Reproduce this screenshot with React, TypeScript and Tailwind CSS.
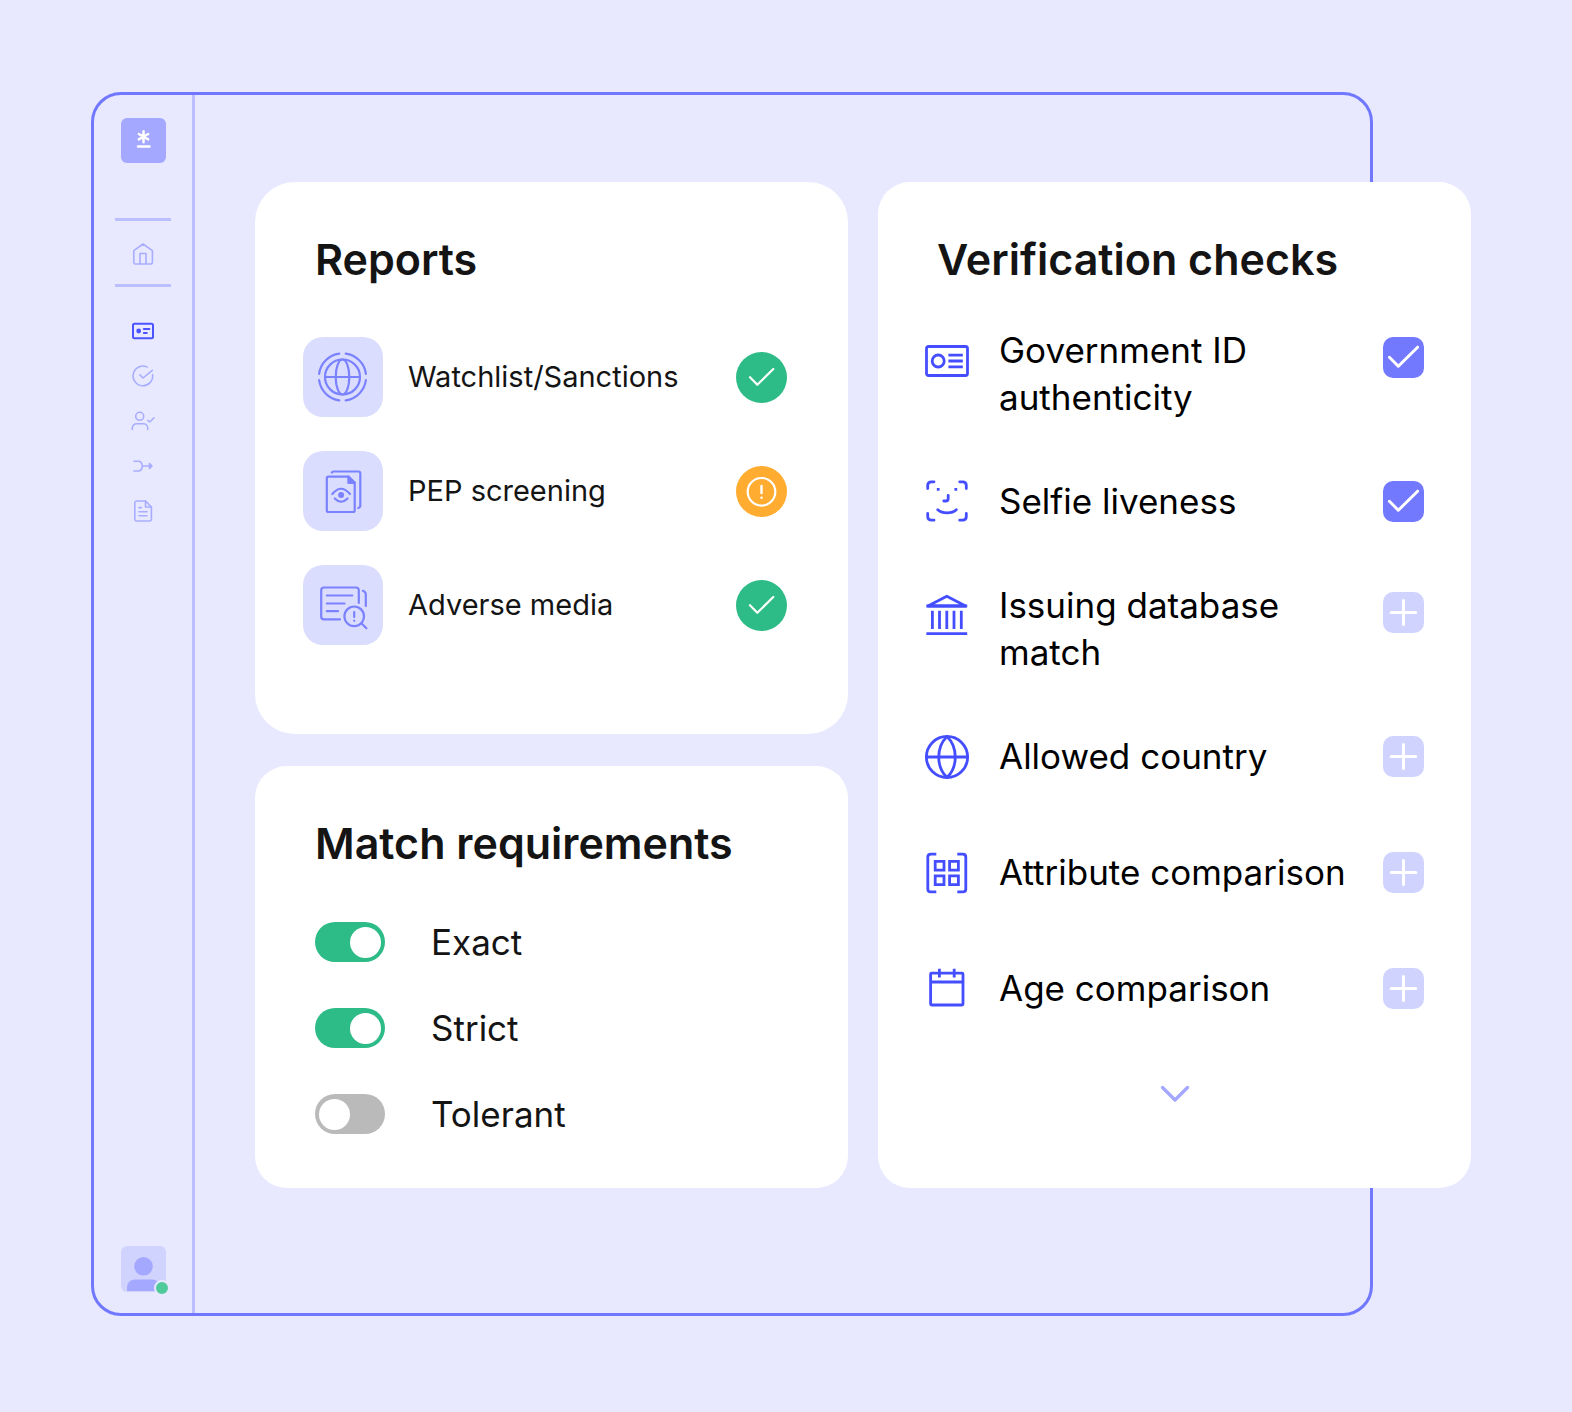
import React from 'react';

interface IconProps {
  size: number;
  stroke?: number;
  className?: string;
  children: React.ReactNode;
}

function Icon({ size, stroke = 2, className, children }: IconProps) {
  return (
    <svg
      width={size}
      height={size}
      viewBox={`0 0 ${size} ${size}`}
      fill="none"
      stroke="currentColor"
      strokeWidth={stroke}
      strokeLinecap="round"
      strokeLinejoin="round"
      className={className}
      aria-hidden="true"
    >
      {children}
    </svg>
  );
}

const navItems = [
  {
    label: 'Inquiries',
    active: true,
    icon: (
      <>
        <rect x="2" y="4.7" width="20" height="14.6" rx="1.5" />
        <circle cx="7.7" cy="12" r="2.4" fill="currentColor" stroke="none" />
        <path d="M12.8 10H18.4M12.8 14H15.8" />
      </>
    ),
  },
  {
    label: 'Verifications',
    active: false,
    icon: (
      <>
        <path d="M21.6 10.6A9.8 9.8 0 1 1 16.2 3.1" />
        <path d="M8.8 10.8L12 14L21.3 6.3" />
      </>
    ),
  },
  {
    label: 'Accounts',
    active: false,
    icon: (
      <>
        <circle cx="8.7" cy="7.3" r="4" />
        <path d="M1.3 20.5V19A4.3 4.3 0 0 1 5.6 14.7H12.4A4.3 4.3 0 0 1 16.7 19V20.5M16.8 11.3L18.8 13L23 8.8" />
      </>
    ),
  },
  {
    label: 'Workflows',
    active: false,
    icon: (
      <>
        <path d="M3 7.2H7.5C10 7.2 11 9.5 11.4 12C11 14.5 10 17 7.5 17H3M11.4 12H19" />
        <path d="M18.5 9.5V14.5L21 12Z" fill="currentColor" />
      </>
    ),
  },
  {
    label: 'Documents',
    active: false,
    icon: (
      <>
        <path d="M14.5 2H5.5A1.8 1.8 0 0 0 3.8 3.8V20.2A1.8 1.8 0 0 0 5.5 22H18.6A1.8 1.8 0 0 0 20.4 20.2V8Z" />
        <path d="M14.5 2V8H20.4M8 8.6H10.3M8 12.8H16M8 16.8H16" />
      </>
    ),
  },
];

const reports = [
  {
    label: 'Watchlist/Sanctions',
    passed: true,
    icon: (
      <>
        <circle cx="39.5" cy="40" r="17.5" />
        <ellipse cx="39.5" cy="40" rx="6.8" ry="17.5" />
        <path d="M22 40H57" />
        <path d="M42.7 16.6A23.6 23.6 0 0 1 62.9 36.8M62.9 43.2A23.6 23.6 0 0 1 42.7 63.4M36.3 63.4A23.6 23.6 0 0 1 16.1 43.2M16.1 36.8A23.6 23.6 0 0 1 36.3 16.6" />
      </>
    ),
  },
  {
    label: 'PEP screening',
    passed: false,
    icon: (
      <>
        <path d="M28.8 21.6Q29.2 20.5 30.5 20.5H55.5Q57.3 20.5 57.3 22.3V54.5Q57.3 56.5 55.2 57" />
        <path d="M45.4 25.6H25.5Q23.8 25.6 23.8 27.3V59.4Q23.8 61 25.5 61H50Q51.7 61 51.7 59.4V31.8Z" />
        <path d="M45.4 25.6V31.8H51.7Z" fill="currentColor" />
        <path d="M29.3 43Q38 32.5 47 43M31.8 47.5Q38 54 44.6 47.5" />
        <circle cx="38.1" cy="44" r="3" fill="currentColor" stroke="none" />
      </>
    ),
  },
  {
    label: 'Adverse media',
    passed: true,
    icon: (
      <>
        <path d="M37 54.3H21Q18.2 54.3 18.2 51.5V25.3Q18.2 22.5 21 22.5H53Q55.8 22.5 55.8 25.3V38" />
        <path d="M59.8 25.8Q62.8 26.5 62.8 29.5V41M23.8 30.5H49.3M23.8 38.5H41.5M23.8 46.2H35" />
        <circle cx="51.2" cy="51.3" r="9.8" />
        <path d="M58.4 58.3L63.4 63.3M51.2 47V52M51.2 55.5V55.8" />
      </>
    ),
  },
];

const requirements = [
  { label: 'Exact', on: true },
  { label: 'Strict', on: true },
  { label: 'Tolerant', on: false },
];

const checks = [
  {
    label: 'Government ID authenticity',
    tall: true,
    checked: true,
    icon: (
      <>
        <rect x="1.5" y="7.5" width="41" height="29" rx="2" />
        <circle cx="13.2" cy="22" r="6" />
        <path d="M23.4 16.2H37.8M23.4 22H37.8M23.4 27.8H37.8" strokeLinecap="butt" />
      </>
    ),
  },
  {
    label: 'Selfie liveness',
    tall: false,
    checked: true,
    icon: (
      <>
        <path d="M2.7 8.5V5.5Q2.7 1.8 6.5 1.8H9M34.7 1.8H37.5Q41.3 1.8 41.3 5.5V8.5M41.3 33.5V36.5Q41.3 40.2 37.5 40.2H34.7M9 40.2H6.5Q2.7 40.2 2.7 36.5V33.5" />
        <path d="M23.2 15.3V18.5Q23.2 21 20.7 21H18.8M12.8 29.8C17.3 34 27 34 31.3 29.8" />
        <path d="M11.8 9.4H14.6M29.4 9.4H32.2" strokeLinecap="butt" />
      </>
    ),
  },
  {
    label: 'Issuing database match',
    tall: true,
    checked: false,
    icon: (
      <>
        <path d="M3 12L21.8 2.2L40.6 12Z" />
        <path d="M1.4 12H42.2M1.4 39.7H42.2M7.4 16.8V35M14.5 16.8V35M21.8 16.8V35M29 16.8V35M36.3 16.8V35" strokeLinecap="butt" />
      </>
    ),
  },
  {
    label: 'Allowed country',
    tall: false,
    checked: false,
    icon: (
      <>
        <circle cx="22" cy="22" r="20.6" />
        <path d="M1.4 22H42.6M22 1.4C11 12 11 32 22 42.6C33 32 33 12 22 1.4Z" />
      </>
    ),
  },
  {
    label: 'Attribute comparison',
    tall: false,
    checked: false,
    icon: (
      <>
        <path
          d="M11.3 3.1H5.8Q2.8 3.1 2.8 6V38Q2.8 40.9 5.8 40.9H11.3M32.3 3.1H37.8Q40.8 3.1 40.8 6V38Q40.8 40.9 37.8 40.9H32.3"
          strokeLinecap="butt"
        />
        <path
          d="M10.2 10.4H19V19.2H10.2ZM24.6 10.4H33.4V19.2H24.6ZM10.2 24.8H19V33.6H10.2ZM24.6 24.8H33.4V33.6H24.6Z"
          strokeLinejoin="miter"
        />
      </>
    ),
  },
  {
    label: 'Age comparison',
    tall: false,
    checked: false,
    icon: (
      <>
        <rect x="5.6" y="6.2" width="32.4" height="31.8" rx="1" />
        <path d="M5.6 15H38M14.4 1.8V10.4M29.2 1.8V10.4" strokeLinecap="butt" />
      </>
    ),
  },
];

function Sidebar() {
  return (
    <aside className="flex w-[101px] shrink-0 flex-col items-center border-r-3 border-[#bbbeff] pt-[23px] pb-[21px] text-[#a9adff]">
      <a href="#" aria-label="Dashboard" className="rounded-md bg-[#a4a8ff] text-white">
        <Icon size={45} stroke={2.5}>
          <path d="M22.5 13.3V24.2M17.8 16L27.2 21.4M27.2 16L17.8 21.4M17 28.4H28.5" />
        </Icon>
      </a>
      <hr className="mt-[55px] w-14 border-t-3 border-[#bbbeff]" />
      <a href="#" aria-label="Home" className="mt-[21px]">
        <Icon size={24} stroke={1.6}>
          <path d="M12 2L21.4 8.6V20.4Q21.4 22 19.8 22H4.4Q2.8 22 2.8 20.4V8.6ZM9 22V11.5H15V22" />
        </Icon>
      </a>
      <hr className="mt-[18px] w-14 border-t-3 border-[#bbbeff]" />
      <nav className="mt-8 flex flex-col gap-[21px]">
        {navItems.map((item) => (
          <a key={item.label} href="#" aria-label={item.label} className={item.active ? 'text-[#4b53ff]' : ''}>
            <Icon size={24} stroke={item.active ? 2 : 1.6}>
              {item.icon}
            </Icon>
          </a>
        ))}
      </nav>
      <button type="button" aria-label="Profile" className="relative mt-auto rounded-md bg-[#d1d3ff]">
        <svg width="45" height="46" viewBox="0 0 45 46" fill="#a4a8ff" aria-hidden="true">
          <circle cx="22.5" cy="20.3" r="9.3" />
          <path d="M6 45V41Q7 33.5 14 33.5H31Q38 33.5 39 41V45Z" />
        </svg>
        <span className="absolute -right-1 -bottom-1 size-4 rounded-full border-2 border-[#e8e9ff] bg-[#4fca9b]" />
      </button>
    </aside>
  );
}

function ReportsCard() {
  return (
    <section className="rounded-[40px] bg-white pt-[51px] pr-[61px] pb-[89px] pl-12">
      <h2 className="pl-3 text-[43px] leading-[52px] font-semibold">Reports</h2>
      <ul className="mt-[52px] flex flex-col gap-[34px]">
        {reports.map((report) => (
          <li key={report.label} className="flex items-center gap-[25px]">
            <span className="rounded-[20px] bg-[#dbddff] text-[#7b82ff]">
              <Icon size={80} stroke={2.2}>
                {report.icon}
              </Icon>
            </span>
            <span className="flex-1 text-[29px] leading-9">{report.label}</span>
            {report.passed ? (
              <span className="rounded-full bg-[#2dbb87] text-white">
                <Icon size={51} stroke={2.2}>
                  <path d="M14 25.2L21.3 32.8L37.3 17" />
                </Icon>
              </span>
            ) : (
              <span className="rounded-full bg-[#ffac30] text-white">
                <Icon size={51} stroke={2.2}>
                  <circle cx="25.5" cy="25.8" r="13.8" />
                  <path d="M25.5 20V27M25.5 31.6V31.8" strokeWidth="2.4" />
                </Icon>
              </span>
            )}
          </li>
        ))}
      </ul>
    </section>
  );
}

function RequirementsCard() {
  return (
    <section className="rounded-[32px] bg-white px-[60px] pt-[51px] pb-[54px]">
      <h2 className="text-[43px] leading-[52px] font-semibold">Match requirements</h2>
      <div className="mt-[53px] flex flex-col gap-[46px]">
        {requirements.map((item) => (
          <label key={item.label} className="flex h-10 items-center gap-[46px] text-[35px]">
            <input
              type="checkbox"
              role="switch"
              defaultChecked={item.on}
              className="flex h-10 w-[70px] shrink-0 appearance-none items-center rounded-full bg-[#bababa] px-1 before:size-[31px] before:rounded-full before:bg-white checked:justify-end checked:bg-[#2dbb87]"
            />
            {item.label}
          </label>
        ))}
      </div>
    </section>
  );
}

function ChecksCard() {
  return (
    <section className="flex flex-col rounded-[32px] bg-white px-[47px] pt-[51px] pb-[70px]">
      <h2 className="pl-3 text-[43px] leading-[52px] font-semibold">Verification checks</h2>
      <div className="mt-[42px] flex flex-col gap-[45px] text-black">
        {checks.map((check) => (
          <label
            key={check.label}
            className={`flex min-h-[71px] gap-[30px] ${check.tall ? 'items-start' : 'items-center'}`}
          >
            <Icon size={44} stroke={2.8} className={`shrink-0 text-[#454eff] ${check.tall ? 'mt-3' : ''}`}>
              {check.icon}
            </Icon>
            <span className="flex-1 text-[35px] leading-[47px]">{check.label}</span>
            <span className={`grid shrink-0 text-white ${check.tall ? 'mt-2.5' : ''}`}>
              <input
                type="checkbox"
                defaultChecked={check.checked}
                className="peer col-start-1 row-start-1 size-[41px] appearance-none rounded-[10px] bg-[#d1d3ff] checked:bg-[#7279ff]"
              />
              <Icon
                size={41}
                stroke={3}
                className="pointer-events-none invisible col-start-1 row-start-1 peer-checked:visible"
              >
                <path d="M6.4 20.3L15.3 29.2L34.6 10.2" />
              </Icon>
              <Icon
                size={41}
                stroke={3}
                className="pointer-events-none col-start-1 row-start-1 peer-checked:invisible"
              >
                <path d="M8.2 20.5H32.8M20.5 8.4V32.6" />
              </Icon>
            </span>
          </label>
        ))}
      </div>
      <button type="button" aria-label="Show more checks" className="mt-[46px] self-center text-[#a4a8ff]">
        <Icon size={48} stroke={3.4}>
          <path d="M11.5 17.5L24 30L36.5 17.5" />
        </Icon>
      </button>
    </section>
  );
}

export default function App() {
  return (
    <div className="min-h-screen bg-[#e8e9ff] pt-[92px] pr-[199px] pb-24 pl-[91px] font-['Inter',sans-serif] text-[#141414]">
      <div className="flex rounded-[30px] border-3 border-[#7178ff]">
        <Sidebar />
        {/* The right-hand card hangs over the edge of the frame */}
        <main className="-mr-[101px] grid flex-1 grid-cols-2 gap-[30px] pt-[87px] pb-[125px] pl-[60px]">
          <div className="flex flex-col gap-8">
            <ReportsCard />
            <RequirementsCard />
          </div>
          <ChecksCard />
        </main>
      </div>
    </div>
  );
}
